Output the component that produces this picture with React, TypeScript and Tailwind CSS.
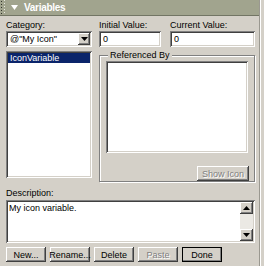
import React from "react";

const sunken =
    "shadow-[inset_1px_1px_0_#808080,inset_-1px_-1px_0_#ffffff,inset_2px_2px_0_#404040,inset_-2px_-2px_0_#d4d0c8]";
const raised =
    "shadow-[inset_-1px_-1px_0_#404040,inset_1px_1px_0_#ffffff,inset_-2px_-2px_0_#808080,inset_2px_2px_0_#d4d0c8]";

function Arrow({ up = false }: { up?: boolean }) {
    return (
        <svg width="7" height="4" viewBox="0 0 7 4" className={up ? "rotate-180" : ""}>
            <path d="M0 0h7L3.5 4z" fill="#000" />
        </svg>
    );
}

function Button({ label, disabled, isDefault }: { label: string; disabled?: boolean; isDefault?: boolean }) {
    return (
        <div
            className={`w-[40px] h-[15px] flex items-center justify-center bg-[#d4d0c8] ${raised} ${
                isDefault ? "outline outline-1 outline-black -outline-offset-1" : ""
            } ${disabled ? "text-[#808080] [text-shadow:1px_1px_0_#ffffff]" : "text-black"}`}
        >
            {label}
        </div>
    );
}

export default function App() {
    return (
        <div className="w-[264px] h-[266px] bg-[#d4d0c8] flex overflow-hidden text-[9px] leading-[12px] text-black font-['Liberation_Sans',Arial,sans-serif]">
            <div className="w-[260px] h-full flex flex-col border-r border-[#9a9890]">
                {/* title bar */}
                <div className="h-[16px] shrink-0 bg-[#a1a48e] border-b border-[#727564] flex items-center">
                    <svg width="6" height="15" viewBox="0 0 6 15" className="ml-[1px]">
                        {[1, 4, 7, 10, 13].map((y) => (
                            <React.Fragment key={y}>
                                <rect x="0" y={y} width="1" height="1" fill="#2f3128" />
                                <rect x="3" y={y - 1} width="1" height="1" fill="#e8e8e0" />
                            </React.Fragment>
                        ))}
                    </svg>
                    <svg width="7" height="5" viewBox="0 0 7 5" className="ml-[4px]">
                        <path d="M0 0h7L3.5 5z" fill="#ffffff" />
                    </svg>
                    <span className="ml-[6px] text-white font-bold text-[10px] tracking-[-0.3px]">Variables</span>
                </div>

                <div className="pl-[6px] pr-[4px] flex flex-col">
                    <div className="flex gap-[7px] mt-[3px]">
                        {/* left column */}
                        <div className="w-[86px] flex flex-col">
                            <span className="h-[12px]">Category:</span>
                            <div className={`h-[16px] bg-white flex items-center p-[2px] ${sunken}`}>
                                <span className="flex-1 pl-[2px]">@"My Icon"</span>
                                <div className={`w-[12px] h-full bg-[#d4d0c8] flex items-center justify-center ${raised}`}>
                                    <Arrow />
                                </div>
                            </div>
                            <div className={`mt-[4px] h-[127px] bg-white p-[2px] ${sunken}`}>
                                <div className="h-[10px] leading-[10px] bg-[#0a246a] text-white pl-[2px]">IconVariable</div>
                            </div>
                        </div>

                        {/* right column */}
                        <div className="flex-1 flex flex-col">
                            <div className="flex gap-[9px]">
                                <div className="w-[62px] flex flex-col">
                                    <span className="h-[12px]">Initial Value:</span>
                                    <div className={`h-[16px] bg-white flex items-center pl-[4px] ${sunken}`}>0</div>
                                </div>
                                <div className="flex-1 flex flex-col">
                                    <span className="h-[12px]">Current Value:</span>
                                    <div className={`h-[16px] bg-white flex items-center pl-[4px] ${sunken}`}>0</div>
                                </div>
                            </div>
                            <div className="relative mt-[8px] h-[127px] border border-[#808080] shadow-[inset_1px_1px_0_#ffffff,1px_1px_0_#ffffff] px-[6px] pt-[5px] flex flex-col">
                                <span className="absolute -top-[7px] left-[8px] bg-[#d4d0c8] px-[2px]">Referenced By</span>
                                <div className={`h-[92px] bg-white ${sunken}`} />
                                <div className="self-end mt-[13px] -mr-[1px]">
                                    <div
                                        className={`w-[52px] h-[15px] flex items-center justify-center text-[#808080] [text-shadow:1px_1px_0_#ffffff] ${raised}`}
                                    >
                                        Show Icon
                                    </div>
                                </div>
                            </div>
                        </div>
                    </div>

                    <span className="mt-[5px] h-[12px]">Description:</span>
                    <div className={`mt-[1px] h-[43px] bg-white flex ${sunken}`}>
                        <span className="flex-1 pl-[3px] pt-[2px]">My icon variable.</span>
                        <div className="w-[13px] my-[2px] mr-[2px] bg-[#ebe9e4] flex flex-col justify-between">
                            <div className={`h-[12px] bg-[#d4d0c8] flex items-center justify-center ${raised}`}>
                                <Arrow up />
                            </div>
                            <div className={`h-[12px] bg-[#d4d0c8] flex items-center justify-center ${raised}`}>
                                <Arrow />
                            </div>
                        </div>
                    </div>

                    <div className="mt-[4px] flex gap-[4px]">
                        <Button label="New..." />
                        <Button label="Rename..." />
                        <Button label="Delete" />
                        <Button label="Paste" disabled />
                        <Button label="Done" isDefault />
                    </div>
                </div>
            </div>
            <div className="flex-1 border-l border-white" />
        </div>
    );
}
